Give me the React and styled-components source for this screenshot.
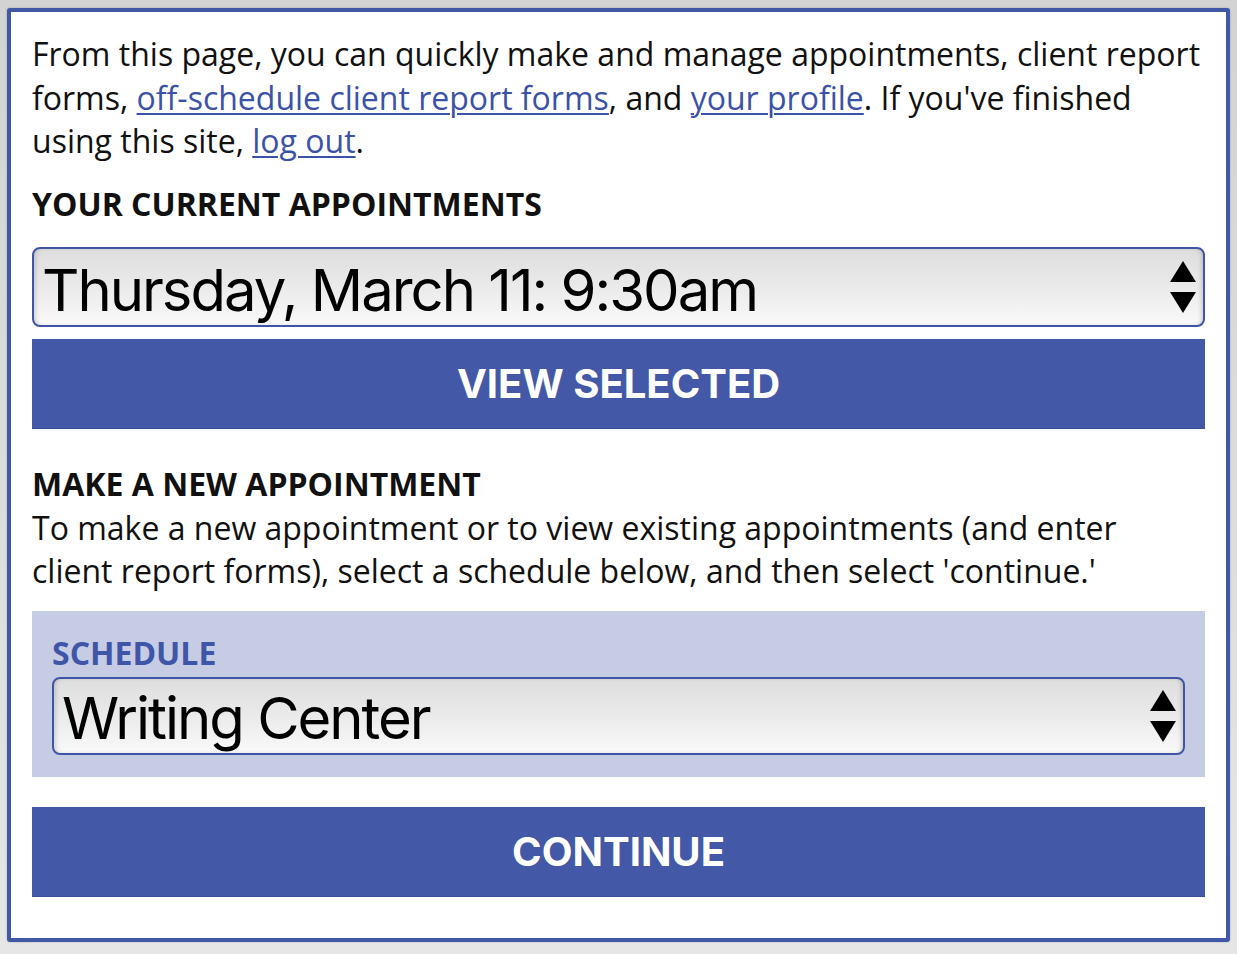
import React from 'react';
import styled, { createGlobalStyle } from 'styled-components';

const GlobalStyle = createGlobalStyle`
  html, body {
    margin: 0;
    padding: 0;
  }
  body {
    background: linear-gradient(#d3d3d3, #e6e6e6);
    min-height: 954px;
    font-family: "Open Sans", "Liberation Sans", sans-serif;
    color: #111;
  }
  #root {
    padding: 8px 7px 11px 7px;
  }
`;

const Card = styled.div`
  background: #fff;
  border: 4px solid #4158a6;
  border-radius: 3px;
  box-shadow: 0 0 2px rgba(0, 0, 0, 0.25);
  padding: 20px 21px 41px 21px;
  display: flex;
  flex-direction: column;
`;

const Text = styled.p`
  margin: 0;
  font-size: 32px;
  line-height: 43.5px;
`;

const TextLink = styled.a`
  color: #3a52a8;
  text-decoration: underline;
  text-underline-offset: 3px;
  text-decoration-thickness: 1.5px;
`;

const Heading = styled.h2`
  margin: ${(p) => p.$top || 0}px 0 0 0;
  font-size: 32px;
  line-height: 43.5px;
  font-weight: 700;
  text-transform: uppercase;
`;

const SelectBox = styled.div`
  display: flex;
  align-items: center;
  justify-content: space-between;
  height: ${(p) => p.$height}px;
  box-sizing: border-box;
  margin-top: ${(p) => p.$top || 0}px;
  padding: 0 6px 0 8px;
  border: 2px solid #3f55a5;
  border-radius: 8px;
  background: linear-gradient(#dedede 0%, #e9e9e9 45%, #f9f9f9 100%);
  box-shadow: inset 4px 0 4px -2px rgba(0, 0, 0, 0.15), inset -4px 0 4px -2px rgba(0, 0, 0, 0.15);
  font-family: Inter, "Liberation Sans", Arial, sans-serif;
  font-size: 58px;
  letter-spacing: -2px;
  color: #000;
  cursor: pointer;

  span {
    padding-top: 5px;
  }
`;

const Arrows = styled.svg`
  width: 28px;
  height: 56px;
  flex-shrink: 0;
`;

const ActionButton = styled.button`
  margin-top: ${(p) => p.$top || 0}px;
  height: 90px;
  width: 100%;
  border: none;
  border-bottom: 1px solid #3a4f98;
  background: #4358a6;
  color: #fff;
  font-family: Inter, "Liberation Sans", Arial, sans-serif;
  font-weight: 700;
  font-size: 40px;
  text-transform: uppercase;
  cursor: pointer;
`;

const SchedulePanel = styled.div`
  margin-top: 18px;
  background: #c6cce3;
  padding: 24px 20px 22px 20px;
  display: flex;
  flex-direction: column;
`;

const PanelLabel = styled.label`
  font-size: 32px;
  line-height: 36px;
  font-weight: 700;
  color: #3f56a8;
  text-transform: uppercase;
  margin-bottom: 6px;
`;

const Stepper = () => (
  <Arrows viewBox="0 0 28 56">
    <polygon points="14,2 27,23 1,23" fill="#000" />
    <polygon points="1,33 27,33 14,54" fill="#000" />
  </Arrows>
);

const Select = ({ value, height, top }) => (
  <SelectBox $height={height} $top={top}>
    <span>{value}</span>
    <Stepper />
  </SelectBox>
);

export default function App() {
  return (
    <>
      <GlobalStyle />
      <Card>
        <Text>
          From this page, you can quickly make and manage appointments, client report
          forms, <TextLink href="#">off-schedule client report forms</TextLink>, and{' '}
          <TextLink href="#">your profile</TextLink>. If you've finished using this site,{' '}
          <TextLink href="#">log out</TextLink>.
        </Text>
        <Heading $top={19}>Your current appointments</Heading>
        <Select value="Thursday, March 11: 9:30am" height={80} top={22} />
        <ActionButton $top={12}>View selected</ActionButton>
        <Heading $top={33}>Make a new appointment</Heading>
        <Text>
          To make a new appointment or to view existing appointments (and enter
          client report forms), select a schedule below, and then select 'continue.'
        </Text>
        <SchedulePanel>
          <PanelLabel>Schedule</PanelLabel>
          <Select value="Writing Center" height={78} />
        </SchedulePanel>
        <ActionButton $top={30}>Continue</ActionButton>
      </Card>
    </>
  );
}
